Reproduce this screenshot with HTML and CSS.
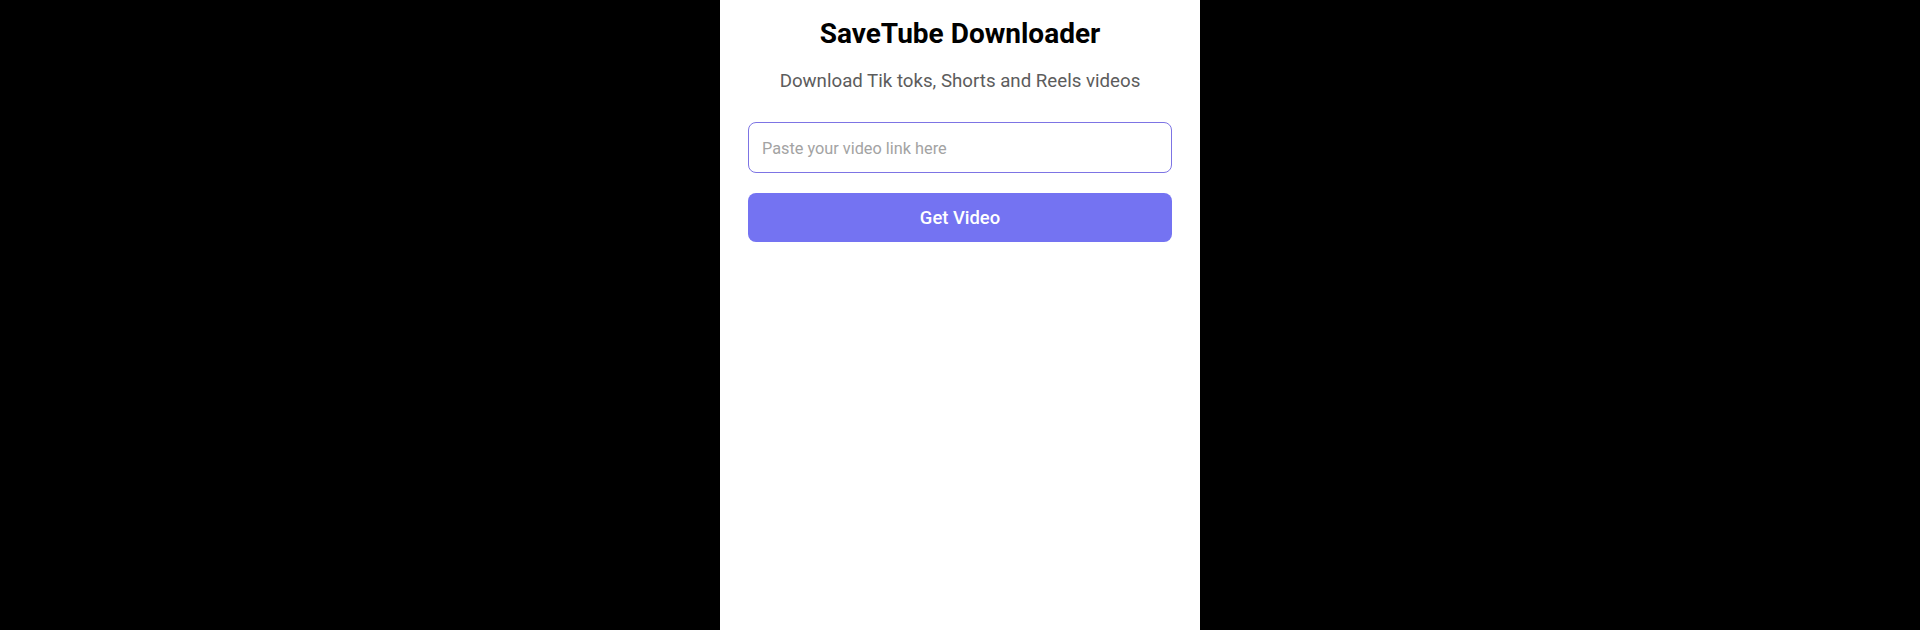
FILE: index.html
```html
<!DOCTYPE html>
<html lang="en">
<head>
<meta charset="utf-8">
<title>SaveTube Downloader</title>
<link rel="stylesheet" href="styles.css">
</head>
<body>
<main class="panel">
  <h1 class="title">SaveTube Downloader</h1>
  <p class="subtitle">Download Tik toks, Shorts and Reels videos</p>
  <form class="form">
    <input class="link-input" type="text" placeholder="Paste your video link here">
    <button class="get-btn" type="button">Get Video</button>
  </form>
</main>
</body>
</html>
```
FILE: styles.css
```css
html, body {
  margin: 0;
  padding: 0;
  background: #000;
  height: 100%;
}
body {
  font-family: Roboto, "Liberation Sans", sans-serif;
}
.panel {
  box-sizing: border-box;
  width: 480px;
  min-height: 100vh;
  margin: 0 auto;
  background: #fff;
  padding: 17px 28px 0;
  display: flex;
  flex-direction: column;
}
.title {
  margin: 0;
  font-size: 28px;
  line-height: 34px;
  font-weight: 700;
  color: #000;
  text-align: center;
}
.subtitle {
  margin: 18px 0 0;
  font-size: 18.7px;
  line-height: 24px;
  color: #5c5c5c;
  text-align: center;
}
.form {
  margin-top: 29px;
  display: flex;
  flex-direction: column;
  gap: 20px;
}
.link-input {
  box-sizing: border-box;
  height: 51px;
  width: 100%;
  border: 1.5px solid #7d74e4;
  border-radius: 8px;
  padding: 2px 13px 0;
  font-family: Roboto, "Liberation Sans", sans-serif;
  font-size: 16.3px;
  color: #222;
  outline: none;
  background: #fff;
}
.link-input::placeholder {
  color: #a3a3a3;
}
.get-btn {
  height: 49px;
  width: 100%;
  border: none;
  border-radius: 8px;
  background: #7473f2;
  color: #fff;
  font-family: Roboto, "Liberation Sans", sans-serif;
  font-size: 18.4px;
  font-weight: 500;
  cursor: pointer;
}
```
